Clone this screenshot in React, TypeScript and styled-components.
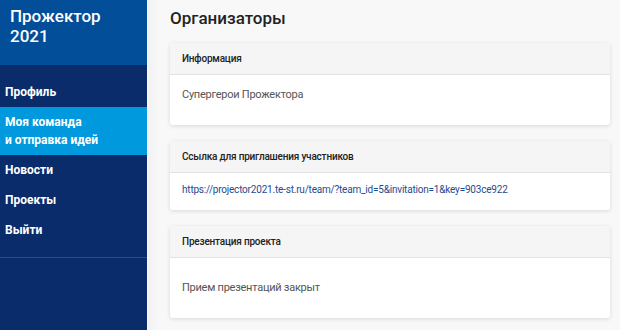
import React from "react";
import styled, { createGlobalStyle } from "styled-components";

const GlobalStyle = createGlobalStyle`
  html, body {
    margin: 0;
    padding: 0;
    height: 100%;
  }
  body {
    font-family: "Roboto", "Liberation Sans", sans-serif;
    background: #f7f7f7;
  }
  #root {
    height: 100%;
  }
`;

const Layout = styled.div`
  display: flex;
  height: 330px;
  overflow: hidden;
`;

const Sidebar = styled.aside`
  width: 147px;
  flex-shrink: 0;
  background: #0b2c6b;
  border-right: 1px solid #fbfbfb;
  display: flex;
  flex-direction: column;
`;

const Brand = styled.div`
  height: 65px;
  box-sizing: border-box;
  background: #034e99;
  color: #fff;
  font-size: 17px;
  font-weight: 500;
  line-height: 20px;
  padding: 6px 10px 0;
`;

const Nav = styled.nav`
  display: flex;
  flex-direction: column;
  padding: 12px 0;
  border-bottom: 1px solid #2b4c85;
`;

const NavItem = styled.a<{ $active?: boolean }>`
  display: block;
  padding: 6px 5px;
  font-size: 12px;
  font-weight: 700;
  line-height: 18px;
  color: #fff;
  text-decoration: none;
  background: ${(p) => (p.$active ? "#0099dd" : "transparent")};
`;

const Main = styled.main`
  flex: 1;
  padding: 7px 10px 0 22px;
  display: flex;
  flex-direction: column;
  gap: 16px;
  background: linear-gradient(90deg, #f2f2f2 0, #f8f8f8 12px, #f8f8f8 100%);
`;

const Title = styled.h1`
  margin: 0 0 -3px;
  font-size: 17px;
  font-weight: 500;
  line-height: 23px;
  color: #222;
`;

const Card = styled.section`
  background: #fff;
  border-radius: 3px;
  box-shadow: 0 1px 4px rgba(0, 0, 0, 0.13);
  overflow: hidden;
`;

const CardHeader = styled.div`
  height: 31px;
  display: flex;
  align-items: center;
  padding: 0 12px;
  background: #f5f5f5;
  border-bottom: 1px solid #e3e3e3;
  font-size: 10px;
  font-weight: 500;
  letter-spacing: -0.2px;
  color: #222;
`;

const CardBody = styled.div<{ $top: number; $bottom: number }>`
  padding: ${(p) => p.$top}px 12px ${(p) => p.$bottom}px;
  font-size: 11px;
  letter-spacing: -0.25px;
  line-height: 16px;
  color: #555;
`;

const Link = styled.a`
  font-size: 10px;
  letter-spacing: -0.2px;
  color: #1f4b90;
  text-decoration: none;
`;

const items = [
  { label: "Профиль" },
  { label: "Моя команда\nи отправка идей", active: true },
  { label: "Новости" },
  { label: "Проекты" },
  { label: "Выйти" },
];

export default function App() {
  return (
    <>
      <GlobalStyle />
      <Layout>
        <Sidebar>
          <Brand>
            Прожектор
            <br />
            2021
          </Brand>
          <Nav>
            {items.map((item) => (
              <NavItem key={item.label} href="#" $active={item.active}>
                {item.label.split("\n").map((line, i) => (
                  <React.Fragment key={i}>
                    {i > 0 && <br />}
                    {line}
                  </React.Fragment>
                ))}
              </NavItem>
            ))}
          </Nav>
        </Sidebar>
        <Main>
          <Title>Организаторы</Title>
          <Card>
            <CardHeader>Информация</CardHeader>
            <CardBody $top={12} $bottom={22}>
              Супергерои Прожектора
            </CardBody>
          </Card>
          <Card>
            <CardHeader>Ссылка для приглашения участников</CardHeader>
            <CardBody $top={9} $bottom={12}>
              <Link href="#">
                https://projector2021.te-st.ru/team/?team_id=5&amp;invitation=1&amp;key=903ce922
              </Link>
            </CardBody>
          </Card>
          <Card>
            <CardHeader>Презентация проекта</CardHeader>
            <CardBody $top={22} $bottom={22}>
              Прием презентаций закрыт
            </CardBody>
          </Card>
        </Main>
      </Layout>
    </>
  );
}
